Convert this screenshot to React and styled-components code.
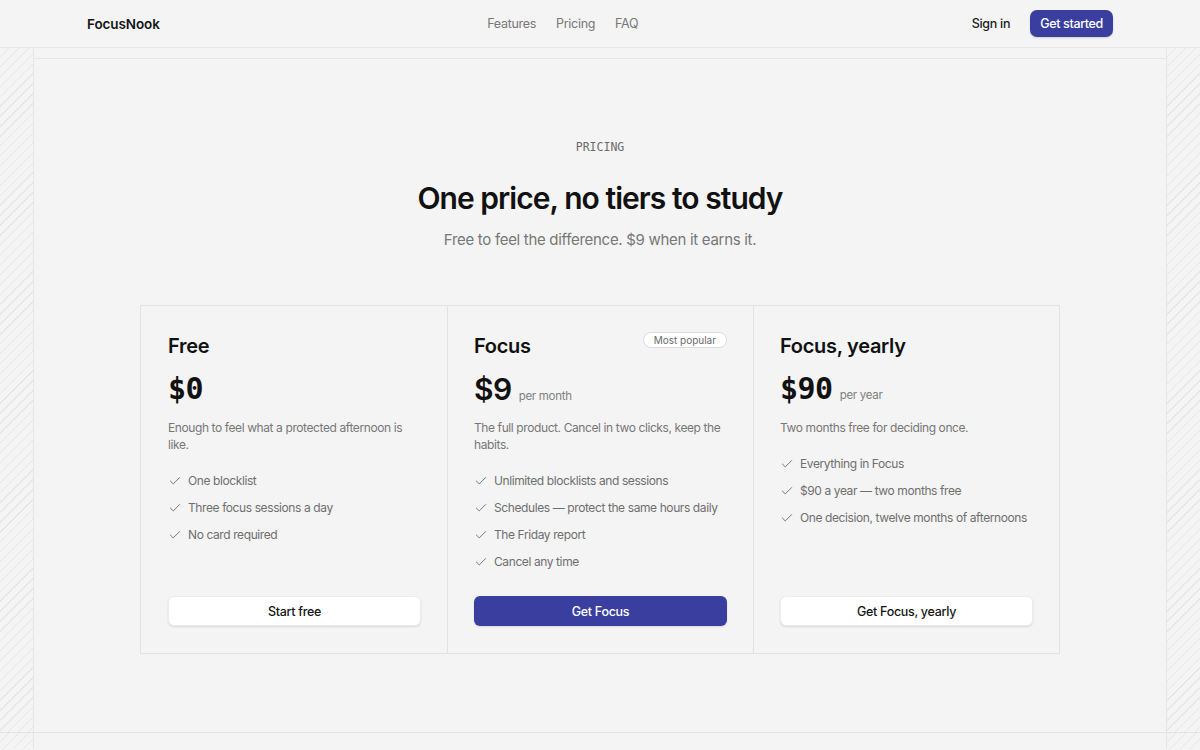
import styled, { createGlobalStyle } from "styled-components";
import { Check } from "lucide-react";

const GlobalStyle = createGlobalStyle`
  * { box-sizing: border-box; }
  html, body { margin: 0; padding: 0; }
  body {
    background: #f4f4f4;
    font-family: Inter, "Noto Sans", sans-serif;
    letter-spacing: -0.3px;
    color: #111;
    -webkit-font-smoothing: antialiased;
  }
`;

const plans = [
  {
    name: "Free",
    price: "$0",
    mono: true,
    desc: "Enough to feel what a protected afternoon is like.",
    features: ["One blocklist", "Three focus sessions a day", "No card required"],
    cta: "Start free",
  },
  {
    name: "Focus",
    price: "$9",
    period: "per month",
    badge: "Most popular",
    desc: "The full product. Cancel in two clicks, keep the habits.",
    features: [
      "Unlimited blocklists and sessions",
      "Schedules — protect the same hours daily",
      "The Friday report",
      "Cancel any time",
    ],
    cta: "Get Focus",
    primary: true,
  },
  {
    name: "Focus, yearly",
    price: "$90",
    period: "per year",
    mono: true,
    desc: "Two months free for deciding once.",
    features: [
      "Everything in Focus",
      "$90 a year — two months free",
      "One decision, twelve months of afternoons",
    ],
    cta: "Get Focus, yearly",
  },
];

function App() {
  return (
    <>
      <GlobalStyle />
      <Header>
        <HeaderInner>
          <Logo>FocusNook</Logo>
          <Nav>
            <NavLink>Features</NavLink>
            <NavLink>Pricing</NavLink>
            <NavLink>FAQ</NavLink>
          </Nav>
          <Actions>
            <SignIn>Sign in</SignIn>
            <StartButton>Get started</StartButton>
          </Actions>
        </HeaderInner>
      </Header>

      <Band>
        <Rail side="left" />
        <BandInner top>
          <Eyebrow>PRICING</Eyebrow>
          <Title>One price, no tiers to study</Title>
          <Lead>Free to feel the difference. $9 when it earns it.</Lead>
          <Plans>
            {plans.map(plan => (
              <Plan key={plan.name}>
                <PlanHead>
                  <PlanName>{plan.name}</PlanName>
                  {plan.badge && <Badge>{plan.badge}</Badge>}
                </PlanHead>
                <PriceRow>
                  <Price mono={plan.mono}>{plan.price}</Price>
                  {plan.period && <Period>{plan.period}</Period>}
                </PriceRow>
                <Desc>{plan.desc}</Desc>
                <Features>
                  {plan.features.map(f => (
                    <Feature key={f}>
                      <Check size={14} strokeWidth={1.5} color="#666" />
                      {f}
                    </Feature>
                  ))}
                </Features>
                <PlanButton primary={plan.primary}>{plan.cta}</PlanButton>
              </Plan>
            ))}
          </Plans>
        </BandInner>
        <Rail side="right" />
      </Band>

      <Band last>
        <Rail side="left" />
        <BandInner />
        <Rail side="right" />
      </Band>
    </>
  );
}

export default App;

const Header = styled.header`
  height: 48px;
  border-bottom: 1px solid #e6e6e6;
`;

const HeaderInner = styled.div`
  width: 1026px;
  height: 47px;
  margin: 0 auto;
  display: flex;
  justify-content: space-between;
  align-items: center;
`;

const Logo = styled.div`
  font-size: 13.5px;
  font-weight: 600;
  letter-spacing: -0.1px;
  color: #161616;
`;

const Nav = styled.nav`
  display: flex;
  gap: 20px;
  margin-left: -6px;
`;

const NavLink = styled.a`
  font-size: 12.5px;
  color: #777;
  cursor: pointer;
`;

const Actions = styled.div`
  display: flex;
  align-items: center;
  gap: 20px;
`;

const SignIn = styled.a`
  font-size: 12.5px;
  font-weight: 500;
  color: #1d1d1d;
`;

const StartButton = styled.button`
  height: 27px;
  padding: 0 10px;
  border: none;
  border-radius: 7px;
  background: #3a3f9f;
  color: #fff;
  font-family: inherit;
  font-size: 12.5px;
  font-weight: 500;
  letter-spacing: -0.35px;
  box-shadow: 0 1px 2px rgba(0, 0, 0, 0.15);
`;

const Band = styled.section`
  display: grid;
  grid-template-columns: 34px 1fr 34px;
  border-bottom: ${props => (props.last ? "none" : "1px solid #e3e3e3")};
  min-height: ${props => (props.last ? "16px" : "auto")};
`;

const Rail = styled.div`
  background: repeating-linear-gradient(
    135deg,
    transparent 0 6px,
    #e6e6e6 6px 7px
  );
  border-right: ${props => (props.side === "left" ? "1px solid #e6e6e6" : "none")};
  border-left: ${props => (props.side === "right" ? "1px solid #e6e6e6" : "none")};
`;

const BandInner = styled.div`
  margin-top: ${props => (props.top ? "10px" : "0")};
  border-top: ${props => (props.top ? "1px solid #e6e6e6" : "none")};
  padding: ${props => (props.top ? "81px 0 78px" : "0")};
  display: flex;
  flex-direction: column;
  align-items: center;
`;

const Eyebrow = styled.div`
  font-family: "DejaVu Sans Mono", "Liberation Mono", monospace;
  font-size: 11.5px;
  line-height: 14px;
  letter-spacing: 0;
  color: #6a6a6a;
`;

const Title = styled.h1`
  margin: 26px 0 0;
  font-size: 30px;
  line-height: 36px;
  font-weight: 600;
  letter-spacing: -0.95px;
  color: #111;
`;

const Lead = styled.p`
  margin: 13px 0 0;
  font-size: 15px;
  line-height: 22px;
  color: #777;
`;

const Plans = styled.div`
  margin-top: 54px;
  width: 920px;
  display: grid;
  grid-template-columns: repeat(3, 1fr);
  border: 1px solid #e2e2e2;
`;

const Plan = styled.div`
  display: flex;
  flex-direction: column;
  padding: 28px 26px 27px 27px;
  border-left: 1px solid #e2e2e2;

  &:first-child {
    border-left: none;
  }

  & + & {
    padding-left: 26px;
  }
`;

const PlanHead = styled.div`
  display: flex;
  justify-content: space-between;
  align-items: flex-start;
`;

const PlanName = styled.h2`
  margin: 0;
  font-size: 20px;
  line-height: 24px;
  font-weight: 600;
  letter-spacing: -0.3px;
  color: #111;
`;

const Badge = styled.span`
  margin-top: -2px;
  padding: 1px 10px;
  border: 1px solid #dcdcdc;
  border-radius: 999px;
  background: #fff;
  font-size: 10px;
  line-height: 12px;
  letter-spacing: 0;
  color: #6a6a6a;
`;

const PriceRow = styled.div`
  margin-top: 13px;
  display: flex;
  align-items: baseline;
  gap: 7px;
`;

const Price = styled.span`
  font-family: ${props =>
    props.mono ? '"DejaVu Sans Mono", "Liberation Mono", monospace' : "Inter, sans-serif"};
  font-size: 30px;
  line-height: 36px;
  font-weight: ${props => (props.mono ? 700 : 600)};
  letter-spacing: -0.5px;
  color: #111;
`;

const Period = styled.span`
  font-size: 11.5px;
  color: #808080;
`;

const Desc = styled.p`
  margin: 12px 0 0;
  font-size: 12px;
  line-height: 17px;
  letter-spacing: -0.4px;
  color: #777;
`;

const Features = styled.ul`
  list-style: none;
  margin: 18px 0 24px;
  padding: 0;
  display: flex;
  flex-direction: column;
  gap: 7px;
`;

const Feature = styled.li`
  display: flex;
  align-items: center;
  gap: 6px;
  font-size: 12px;
  line-height: 20px;
  letter-spacing: -0.4px;
  white-space: nowrap;
  color: #6f6f6f;
`;

const PlanButton = styled.button`
  margin-top: auto;
  height: 30px;
  width: 100%;
  border: ${props => (props.primary ? "none" : "1px solid #ececec")};
  border-radius: 6px;
  background: ${props => (props.primary ? "#3a3f9f" : "#fff")};
  color: ${props => (props.primary ? "#fff" : "#151515")};
  font-family: inherit;
  font-size: 12.5px;
  font-weight: 500;
  letter-spacing: -0.3px;
  box-shadow: 0 1px 2px rgba(0, 0, 0, 0.12);
`;
